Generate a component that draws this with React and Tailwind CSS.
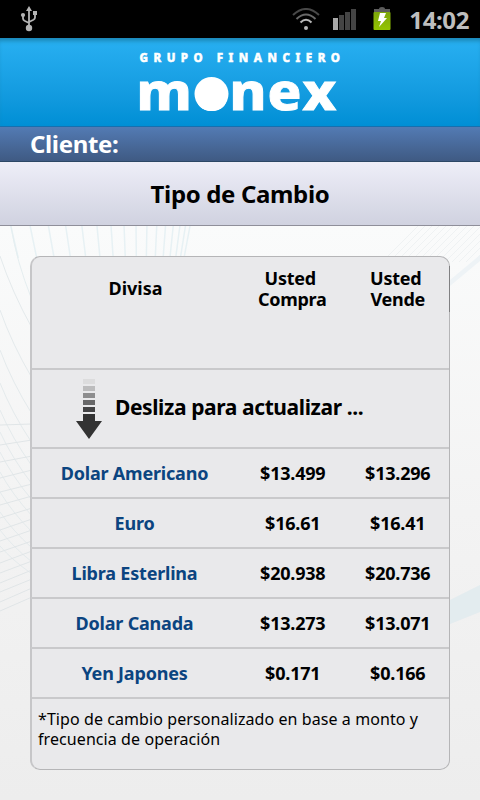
const rates = [
  { name: "Dolar Americano", buy: "$13.499", sell: "$13.296" },
  { name: "Euro", buy: "$16.61", sell: "$16.41" },
  { name: "Libra Esterlina", buy: "$20.938", sell: "$20.736" },
  { name: "Dolar Canada", buy: "$13.273", sell: "$13.071" },
  { name: "Yen Japones", buy: "$0.171", sell: "$0.166" },
];

function UsbIcon() {
  return (
    <svg width="18" height="26" viewBox="0 0 18 26" fill="#b4b4b4">
      <path d="M9 0l3 5H6z" />
      <circle cx="9" cy="22" r="3.2" />
      <circle cx="3" cy="9" r="2.1" />
      <rect x="13" y="5" width="4" height="4" />
      <path
        d="M9 4v17M3 9v3.5q0 1.500 1.500 2.300L9 17M15 8v3.500q0 1.500-1.500 2.300L9 16"
        fill="none"
        stroke="#b4b4b4"
        strokeWidth="1.8"
      />
    </svg>
  );
}

function WifiIcon() {
  return (
    <svg width="28" height="23" viewBox="0 0 28 23" fill="none" strokeWidth="2">
      <path d="M1 7Q14-5 27 7" stroke="#484848" />
      <path d="M4.500 11Q14 2 23.500 11" stroke="#686868" />
      <path d="M8.500 14.500Q14 9 19.500 14.500" stroke="#b8b8b8" />
      <circle cx="14" cy="20" r="2" fill="#b8b8b8" />
    </svg>
  );
}

function SignalIcon() {
  return (
    <svg className="mt-0.5" width="24" height="22" viewBox="0 0 24 22">
      <rect x="0" y="9" width="5" height="12" fill="#a8a8a8" />
      <rect x="6" y="6" width="5" height="15" fill="#444" />
      <rect x="12" y="3" width="5" height="18" fill="#444" />
      <rect x="18" y="0" width="5" height="21" fill="#444" />
    </svg>
  );
}

function BatteryIcon() {
  return (
    <svg width="18" height="24" viewBox="0 0 18 24">
      <defs>
        <linearGradient id="battery" x1="0" x2="0" y1="0" y2="1">
          <stop offset="0" stopColor="#7da60c" />
          <stop offset="1" stopColor="#93c400" />
        </linearGradient>
      </defs>
      <path d="M6 2q0-2 3-2t3 2h5v5H1V2z" fill="#5c5c5c" />
      <rect x="0.500" y="5" width="17" height="18" rx="1" fill="url(#battery)" />
      <path d="M7 6h6l-2 5h3L6 20l2-6H5z" fill="#fff" />
    </svg>
  );
}

function Logo() {
  return (
    <svg
      className="overflow-visible"
      width="212"
      height="64"
      viewBox="134 50 212 64"
      fill="#fff"
      fontFamily="Noto Sans, sans-serif"
    >
      <text
        x="139.500"
        y="62"
        fontSize="11.500"
        fontWeight="800"
        textLength="200.500"
        stroke="#fff"
        strokeWidth="0.5"
      >
        GRUPO FINANCIERO
      </text>
      <text
        x="136.500 194 229.500 267.500 302.500"
        y="0"
        transform="translate(0 109.500) scale(1 0.9)"
        fontSize="56"
        fontWeight="800"
        stroke="#fff"
        strokeWidth="1"
      >
        monex
      </text>
      <circle cx="211.500" cy="94" r="17" />
    </svg>
  );
}

// left and right y of each flat line beside the panel
const flatLines = [
  [425, 424], [445, 440], [462, 456], [478, 470], [492, 484], [505, 496],
  [518, 508], [530, 519], [541, 530], [552, 541], [563, 551], [573, 561],
  [583, 570], [592, 579], [602, 588], [611, 597],
];

const slopes = [256, 310, 350, 383, 410, 432, 452, 472, 492, 512, 530, 546];

function Backdrop() {
  const fan = Array.from({ length: 16 }, (_, i) => i);
  return (
    <svg
      className="absolute inset-0"
      width="480"
      height="574"
      viewBox="0 226 480 574"
      fill="none"
    >
      {fan.map((i) => (
        <path
          key={`v${i}`}
          d={`M${190 - i * (4 + i * 0.53)} 226l${-6 + i * 0.9} 32`}
          stroke="#e7f1f4"
          strokeWidth="1.5"
        />
      ))}
      <path d="M11 226Q16 260 32 300" stroke="#e5eef0" />
      {slopes.map((y, i) => (
        <path
          key={`d${y}`}
          d={`M0 ${y}Q12 ${y + 36 - i * 2} 32 ${y + 72 - i * 4}`}
          stroke="#e4eaec"
        />
      ))}
      {flatLines.map(([left, right]) => (
        <path
          key={left}
          d={`M0 ${left}L32 ${right}`}
          stroke="#e0e5e7"
        />
      ))}
      {fan.map((i) => (
        <path
          key={`r${i}`}
          d={`M${382 + i * 7} 262L${418 + i * 7} 226`}
          stroke="#eff2f3"
        />
      ))}
      <path d="M450 280L480 255V261L450 286z" fill="#eef3f6" />
      <path d="M450 600L480 585V612L450 624z" fill="#e3ecef" />
    </svg>
  );
}

function PullArrow() {
  return (
    <svg width="26" height="61" viewBox="0 0 26 61">
      <rect x="7" y="1" width="12" height="5" fill="#dcdcdd" />
      <rect x="7" y="8" width="12" height="5" fill="#bcbcbd" />
      <rect x="7" y="15" width="12" height="5" fill="#8d8d8e" />
      <rect x="7" y="22" width="12" height="5" fill="#686869" />
      <rect x="7" y="29" width="12" height="5" fill="#444445" />
      <path d="M7 36h12v7h7L13 61 0 43h7z" fill="#333" />
    </svg>
  );
}

export default function App() {
  return (
    <div className="flex h-[800px] w-[480px] flex-col overflow-hidden bg-[#f2f2f2] font-['Noto_Sans',sans-serif] text-black">
      {/* Status bar */}
      <div className="flex h-[38px] shrink-0 items-center bg-black pr-[11px] pl-5">
        <UsbIcon />
        <div className="ml-auto flex items-center">
          <WifiIcon />
          <div className="ml-[13px]">
            <SignalIcon />
          </div>
          <div className="ml-4">
            <BatteryIcon />
          </div>
          <span className="ml-[18px] pt-0.5 text-[24px] leading-none font-bold tracking-[-0.4px] text-[#bebebe]">
            14:02
          </span>
        </div>
      </div>

      {/* Brand header */}
      <header className="flex h-[89px] shrink-0 justify-center border-b border-[#176fae] bg-linear-to-b from-[#28b0f2] to-[#008fd5] pt-3 shadow-[inset_0_5px_4px_-2px_#1b86b5]">
        <Logo />
      </header>

      <div className="flex h-[35px] shrink-0 items-center border-b border-[#2c4766] bg-linear-to-b from-[#537bb4] to-[#3f5a83] pl-[30px]">
        <span className="text-[24px] leading-none font-bold tracking-[-0.35px] text-white">
          Cliente:
        </span>
      </div>

      <div className="flex h-16 shrink-0 items-center justify-center border-b border-[#8f8f9a] bg-linear-to-b from-[#eeeef8] to-[#d0d2e0]">
        <h1 className="text-[24px] leading-none font-bold tracking-[-0.35px]">
          Tipo de Cambio
        </h1>
      </div>

      <main className="relative flex-1 bg-linear-to-b from-[#fafbfb] via-[#f3f3f3] to-[#ededed] px-[30px] pt-[30px]">
        <Backdrop />
        <section className="relative flex h-[514px] flex-col rounded-[10px] border border-l-2 border-[#b5b5b7] border-l-[#c6c6c8] bg-[#e9e9eb]">
          <div className="mt-[9px] -mr-px mb-[56px] -ml-px grid h-[46px] grid-cols-4 border-r border-[#808082] pt-0.5 text-center text-[18px] leading-[21px] font-bold tracking-[-0.25px]">
            <div className="col-span-2 pt-[10px] tracking-normal">Divisa</div>
            <div>
              <div className="pr-1">Usted</div>
              <div>Compra</div>
            </div>
            <div className="pl-0.5">
              <div className="pr-1">Usted</div>
              <div>Vende</div>
            </div>
          </div>

          <div className="flex h-[79px] items-center border-t-2 border-[#c9c9cb] pl-11">
            <PullArrow />
            <span className="ml-[13px] pb-0.5 text-[21px] font-bold tracking-[-0.4px]">
              Desliza para actualizar ...
            </span>
          </div>

          {rates.map((rate) => (
            <div
              key={rate.name}
              className="-ml-px grid h-[50px] grid-cols-4 items-center border-t-2 border-[#c9c9cb] text-center text-[18px] font-bold tracking-[-0.2px]"
            >
              <div className="col-span-2 pr-0.5 text-[#0b4480]">{rate.name}</div>
              <div className="pl-px">{rate.buy}</div>
              <div className="pl-0.5">{rate.sell}</div>
            </div>
          ))}

          <p className="flex-1 border-t-2 border-[#c9c9cb] pt-[10px] pl-1.5 text-[16px] leading-5 tracking-[0.08px]">
            *Tipo de cambio personalizado en base a monto y
            <br />
            frecuencia de operación
          </p>
        </section>
      </main>
    </div>
  );
}
